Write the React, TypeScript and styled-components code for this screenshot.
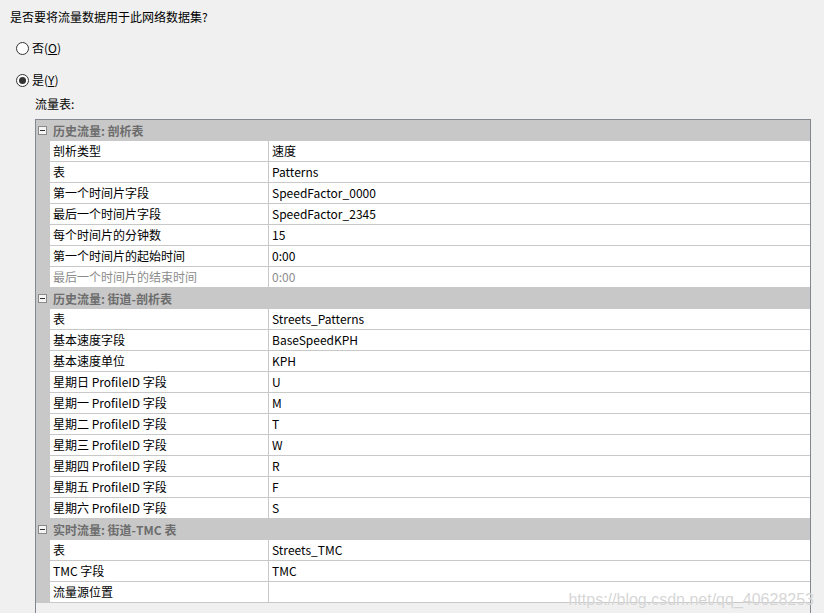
import React from 'react'
import styled, { createGlobalStyle } from 'styled-components'

type Row = { name: string; value: string; disabled?: boolean }
type Section = { title: string; rows: Row[] }

const sections: Section[] = [
  {
    title: '历史流量: 剖析表',
    rows: [
      { name: '剖析类型', value: '速度' },
      { name: '表', value: 'Patterns' },
      { name: '第一个时间片字段', value: 'SpeedFactor_0000' },
      { name: '最后一个时间片字段', value: 'SpeedFactor_2345' },
      { name: '每个时间片的分钟数', value: '15' },
      { name: '第一个时间片的起始时间', value: '0:00' },
      { name: '最后一个时间片的结束时间', value: '0:00', disabled: true },
    ],
  },
  {
    title: '历史流量: 街道-剖析表',
    rows: [
      { name: '表', value: 'Streets_Patterns' },
      { name: '基本速度字段', value: 'BaseSpeedKPH' },
      { name: '基本速度单位', value: 'KPH' },
      { name: '星期日 ProfileID 字段', value: 'U' },
      { name: '星期一 ProfileID 字段', value: 'M' },
      { name: '星期二 ProfileID 字段', value: 'T' },
      { name: '星期三 ProfileID 字段', value: 'W' },
      { name: '星期四 ProfileID 字段', value: 'R' },
      { name: '星期五 ProfileID 字段', value: 'F' },
      { name: '星期六 ProfileID 字段', value: 'S' },
    ],
  },
  {
    title: '实时流量: 街道-TMC 表',
    rows: [
      { name: '表', value: 'Streets_TMC' },
      { name: 'TMC 字段', value: 'TMC' },
      { name: '流量源位置', value: '' },
    ],
  },
]

const GlobalStyle = createGlobalStyle`
  html, body {
    margin: 0;
    padding: 0;
    background: #f0f0f0;
    overflow: hidden;
  }
  body {
    font-family: "Noto Sans CJK SC", "Noto Sans", sans-serif;
    font-size: 12px;
    color: #000;
  }
`

const Page = styled.div`
  position: relative;
  width: 824px;
  height: 613px;
  overflow: hidden;
  display: flex;
  flex-direction: column;
  padding: 8px 0 0 10px;
  box-sizing: border-box;
`

const Question = styled.div`
  height: 18px;
  line-height: 18px;
`

const RadioRow = styled.label<{ $top: number }>`
  display: flex;
  align-items: center;
  gap: 3px;
  margin-top: ${p => p.$top}px;
  margin-left: 6px;
  height: 18px;
  line-height: 18px;
`

const RadioCircle = styled.span<{ $checked?: boolean }>`
  width: 11px;
  height: 11px;
  border: 1px solid #333;
  border-radius: 50%;
  background: #fff;
  display: flex;
  align-items: center;
  justify-content: center;
  &::after {
    content: '';
    width: 7px;
    height: 7px;
    border-radius: 50%;
    background: ${p => (p.$checked ? '#333' : 'transparent')};
  }
`

const Key = styled.span`
  text-decoration: underline;
`

const FieldLabel = styled.div`
  margin: 6px 0 0 25px;
  height: 18px;
  line-height: 18px;
`

const Grid = styled.div`
  margin: 6px 0 0 25px;
  width: 774px;
  height: 520px;
  border: 1px solid #828790;
  border-bottom: none;
  background: #f0f0f0;
  display: flex;
  flex-direction: column;
  flex-shrink: 0;
`

const Header = styled.div`
  height: 21px;
  display: flex;
  align-items: center;
  background: #c8c8c8;
  color: #6d6d6d;
  font-weight: bold;
`

const Toggle = styled.span`
  width: 7px;
  height: 7px;
  margin: 0 6px 0 2px;
  border: 1px solid #8a8a8a;
  background: #f4f4f4;
  display: flex;
  align-items: center;
  justify-content: center;
  &::after {
    content: '';
    width: 5px;
    height: 1px;
    background: #333;
  }
`

const RowLine = styled.div`
  display: flex;
  height: 21px;
  background: #c8c8c8;
`

const Gutter = styled.div`
  width: 14px;
  flex-shrink: 0;
`

const Cells = styled.div`
  flex: 1;
  display: grid;
  grid-template-columns: 218px 1fr;
  background: #fff;
  border-bottom: 1px solid #c8c8c8;
`

const Cell = styled.div<{ $disabled?: boolean }>`
  line-height: 20px;
  padding-left: 3px;
  white-space: nowrap;
  overflow: hidden;
  color: ${p => (p.$disabled ? '#8c8c8c' : '#000')};
  & + & {
    border-left: 1px solid #c8c8c8;
  }
`

const Watermark = styled.div`
  position: absolute;
  right: 10px;
  bottom: 4px;
  font-family: "Liberation Sans", Arial, sans-serif;
  font-size: 16px;
  color: rgba(200, 200, 200, 0.75);
  text-shadow: 0 0 1px rgba(255, 255, 255, 0.8);
  pointer-events: none;
`

export default function App() {
  return (
    <>
      <GlobalStyle />
      <Page>
        <Question>是否要将流量数据用于此网络数据集?</Question>
        <RadioRow $top={13}>
          <RadioCircle />
          <span>
            否(<Key>O</Key>)
          </span>
        </RadioRow>
        <RadioRow $top={14}>
          <RadioCircle $checked />
          <span>
            是(<Key>Y</Key>)
          </span>
        </RadioRow>
        <FieldLabel>流量表:</FieldLabel>
        <Grid>
          {sections.map(section => (
            <React.Fragment key={section.title}>
              <Header>
                <Toggle />
                {section.title}
              </Header>
              {section.rows.map(row => (
                <RowLine key={section.title + row.name}>
                  <Gutter />
                  <Cells>
                    <Cell $disabled={row.disabled}>{row.name}</Cell>
                    <Cell $disabled={row.disabled}>{row.value}</Cell>
                  </Cells>
                </RowLine>
              ))}
            </React.Fragment>
          ))}
        </Grid>
        <Watermark>https://blog.csdn.net/qq_40628253</Watermark>
      </Page>
    </>
  )
}
